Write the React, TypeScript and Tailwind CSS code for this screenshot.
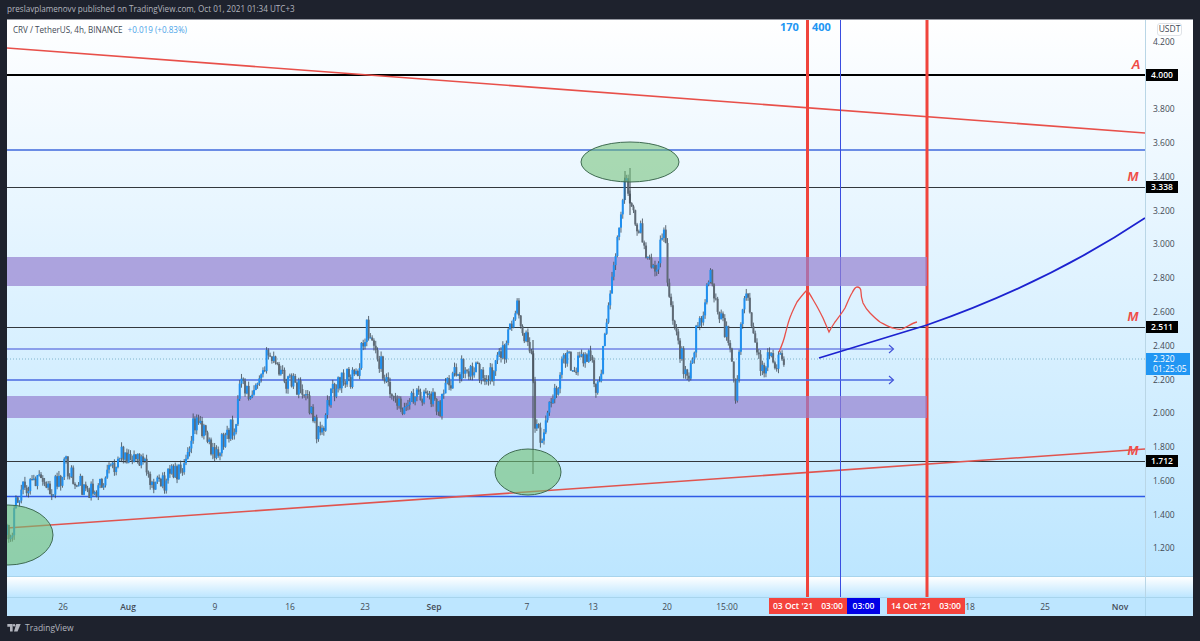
const priceTicks = [
  ["4.200", 41], ["3.800", 108], ["3.600", 142], ["3.400", 176], ["3.200", 210],
  ["3.000", 243], ["2.800", 277], ["2.600", 311], ["2.400", 345], ["2.200", 379],
  ["2.000", 412], ["1.800", 446], ["1.600", 480], ["1.400", 514], ["1.200", 547],
] as const;

const priceTags = [["4.000", 75], ["3.338", 187], ["2.511", 327], ["1.712", 461]] as const;

const timeTicks = [
  ["26", 63, false], ["Aug", 128, true], ["9", 215, false], ["16", 290, false],
  ["23", 365, false], ["Sep", 434, true], ["7", 527, false], ["13", 593, false],
  ["20", 667, false], ["15:00", 727, false], ["18", 970, false], ["25", 1045, false],
  ["Nov", 1120, true],
] as const;

const levels = [
  { y: 75, color: "#000000", w: 2 },
  { y: 150, color: "#3f68dc", w: 1.5 },
  { y: 187.5, color: "#33383d", w: 1 },
  { y: 327.5, color: "#33383d", w: 1 },
  { y: 461.5, color: "#33383d", w: 1 },
  { y: 496.5, color: "#2f5ae6", w: 1.5 },
];

const signs = [
  ["A", 1136, 65],
  ["M", 1133, 177],
  ["M", 1133, 317],
  ["M", 1133, 451],
] as const;

// close price path, in picture pixels
const path: [number, number][] = [
  [7, 535], [12, 530], [15, 510], [22, 490], [30, 485], [40, 482], [50, 490], [60, 478], [66, 465],
  [75, 483], [85, 487], [95, 490], [105, 482], [115, 462], [122, 452], [130, 455], [140, 458],
  [150, 475], [160, 488], [170, 472], [180, 470], [190, 440], [193, 420], [205, 428], [214, 460],
  [225, 435], [235, 425], [240, 385], [250, 395], [262, 365], [270, 355], [280, 375], [295, 385],
  [305, 395], [318, 435], [325, 420], [330, 395], [345, 375], [355, 380], [367, 328], [375, 350],
  [385, 375], [395, 395], [405, 410], [415, 395], [430, 395], [440, 408], [450, 380], [465, 365],
  [475, 372], [490, 375], [505, 350], [517, 305], [525, 335], [532, 360], [535, 420], [542, 440],
  [548, 410], [555, 395], [565, 355], [575, 365], [590, 355], [597, 395], [605, 340], [612, 280],
  [620, 215], [626, 180], [630, 210], [640, 230], [648, 265], [655, 275], [665, 225], [668, 300],
  [678, 340], [688, 385], [695, 340], [705, 300], [710, 275], [720, 320], [730, 340], [735, 400],
  [742, 310], [747, 290], [752, 335], [762, 370], [770, 350], [778, 365], [785, 358],
];

function closeAt(x: number) {
  for (let i = 1; i < path.length; i++) {
    if (x <= path[i][0]) {
      const [x0, y0] = path[i - 1];
      const [x1, y1] = path[i];
      return y0 + ((y1 - y0) * (x - x0)) / (x1 - x0);
    }
  }
  return path[path.length - 1][1];
}

function makeCandles() {
  let seed = 17;
  const rnd = () => {
    seed = (seed * 16807) % 2147483647;
    return seed / 2147483647;
  };
  const list = [];
  let prev = closeAt(7);
  for (let x = 7; x <= 785; x += 1.79) {
    const close = closeAt(x) + (rnd() - 0.5) * 20;
    const top = Math.min(prev, close);
    const bottom = Math.max(prev, close);
    list.push({
      x,
      top,
      bottom,
      high: top - rnd() * 5,
      low: bottom + rnd() * 5,
      up: close < prev,
    });
    prev = close;
  }
  // blue candles sit on top of the grey ones
  return list.sort((a, b) => Number(a.up) - Number(b.up));
}

const candles = makeCandles();

function Chart() {
  return (
    <svg width="1138" height="578" viewBox="7 20 1138 578" className="block">
      {/* dotted last price */}
      <line x1="7" x2="1145" y1="359" y2="359" stroke="#7fb4cc" strokeWidth="1" strokeDasharray="1 2" />

      {levels.map((l) => (
        <line key={l.y} x1="7" x2="1145" y1={l.y} y2={l.y} stroke={l.color} strokeWidth={l.w} />
      ))}

      <line x1="7" y1="48" x2="1145" y2="133" stroke="#e8504a" strokeWidth="1.6" />
      <line x1="7" y1="528" x2="1145" y2="449" stroke="#e0544f" strokeWidth="1.6" />

      <line x1="840.5" x2="840.5" y1="20" y2="598" stroke="#3a4de0" strokeWidth="1" />
      <line x1="807.5" x2="807.5" y1="20" y2="598" stroke="#f0443c" strokeWidth="3" />
      <line x1="927" x2="927" y1="20" y2="598" stroke="#f0443c" strokeWidth="3" />

      <rect x="7" y="257" width="920" height="29" fill="#9680d0" opacity="0.7" />
      <rect x="7" y="396" width="920" height="22" fill="#9680d0" opacity="0.7" />

      {/* arrows */}
      <line x1="7" x2="893" y1="349" y2="349" stroke="#3f4fd8" strokeWidth="1.2" />
      <line x1="7" x2="893" y1="380" y2="380" stroke="#4a68e0" strokeWidth="1.5" />
      <path d="M889 345 L893.5 349 L889 353" fill="none" stroke="#3f4fd8" strokeWidth="1.1" />
      <path d="M889 376 L893.5 380 L889 384" fill="none" stroke="#3f4fd8" strokeWidth="1.1" />

      {candles.map((c, i) => (
        <g key={i}>
          <line x1={c.x} x2={c.x} y1={c.high} y2={c.low} stroke="#3a4550" strokeWidth="0.8" />
          <rect
            x={c.x - 1}
            y={c.top}
            width="2"
            height={Math.max(c.bottom - c.top, 1)}
            fill={c.up ? "#1e8ff0" : "#5f6a75"}
          />
        </g>
      ))}
      <line x1="533" x2="533" y1="340" y2="474" stroke="#3d4650" strokeWidth="1" />
      <line x1="630" x2="630" y1="168" y2="215" stroke="#3d4650" strokeWidth="1" />
      <line x1="625" x2="625" y1="171" y2="200" stroke="#3d4650" strokeWidth="1" />

      <ellipse cx="630" cy="162" rx="49" ry="20" fill="#6fbf73" fillOpacity="0.55" stroke="#3f6b52" strokeWidth="1" />
      <ellipse cx="528" cy="472" rx="33" ry="23" fill="#6fbf73" fillOpacity="0.6" stroke="#3f6b52" strokeWidth="1" />
      <ellipse cx="8" cy="535" rx="45" ry="30" fill="#6fbf73" fillOpacity="0.6" stroke="#3f6b52" strokeWidth="1" />

      <path
        d="M779 352 C782 345 784 340 785 335 C787 328 788 322 791 315 C793 310 795 306 797 302 C800 298 804 293 807 290 C810 294 812 298 815 303 C818 308 820 312 823 318 L829 332 C831 328 833 325 835 322 C838 318 842 313 845 308 C847 304 849 298 852 293 C854 289 856 287 857 287 C860 287 861 289 861 292 C861 296 862 300 863 303 C865 307 867 310 870 313 C873 316 877 320 880 322 C884 324 889 327 893 328 C896 329 899 330 902 329 C907 327 912 323 917 322"
        fill="none"
        stroke="#e8504a"
        strokeWidth="1.3"
      />
      <path d="M819 358 L927 325 C990 303 1070 268 1145 218" fill="none" stroke="#1c22d0" strokeWidth="1.8" />

      <g className="font-['Liberation_Sans',sans-serif] font-bold italic" fill="#ef4c47" fontSize="13">
        {signs.map(([s, x, y]) => (
          <text key={y} x={x} y={y + 4} textAnchor="middle">{s}</text>
        ))}
      </g>
    </svg>
  );
}

function PriceAxis() {
  return (
    <div className="relative w-[47px] border-l border-[#b9d6e6] text-[8.5px] text-[#434a55]">
      <div className="absolute left-[11px] top-[3px] flex h-[13px] w-[25px] items-center justify-center rounded-[3px] border border-[#dfe3e8] bg-white leading-none">
        USDT
      </div>
      {priceTicks.map(([label, y]) => (
        <span key={label} className="absolute left-[7px] leading-none" style={{ top: y - 23 }}>
          {label}
        </span>
      ))}
      {priceTags.map(([label, y]) => (
        <span
          key={label}
          className="absolute left-0 flex h-[12px] w-[32px] items-center justify-center bg-black font-semibold leading-none text-white"
          style={{ top: y - 26 }}
        >
          {label}
        </span>
      ))}
      <div className="absolute left-0 top-[333px] flex h-[22px] w-[44px] flex-col justify-center bg-[#2196f3] pl-[7px] font-medium leading-[10px] text-white">
        <span>2.320</span>
        <span>01:25:05</span>
      </div>
    </div>
  );
}

function TimeAxis() {
  return (
    <div className="relative flex h-[19px] border-t border-[#a8d4ec] bg-[#bde6ff] text-[8.5px] text-[#434a55]">
      <div className="relative w-[1138px]">
        {timeTicks.map(([label, x, bold]) => (
          <span
            key={label}
            className={`absolute top-[2px] -translate-x-1/2 leading-[14px] ${bold ? "font-semibold" : ""}`}
            style={{ left: x - 7 }}
          >
            {label}
          </span>
        ))}
        <div className="absolute left-[762px] top-0 flex h-[16px] whitespace-nowrap text-[8.5px] font-semibold text-white">
          <span className="flex w-[78px] items-center justify-center gap-[8px] bg-[#f4433c]">
            <span>03 Oct '21</span>
            <span>03:00</span>
          </span>
          <span className="flex w-[33px] items-center justify-center bg-[#0000e6]">03:00</span>
          <span className="ml-[7px] flex w-[78px] items-center justify-center gap-[8px] bg-[#f4433c]">
            <span>14 Oct '21</span>
            <span>03:00</span>
          </span>
        </div>
      </div>
      <div className="flex-1 border-l border-[#a8d4ec]" />
    </div>
  );
}

function Logo() {
  return (
    <svg width="14" height="8" viewBox="0 0 15 9" className="block">
      <path d="M0 0H6V8.5H3V3H0Z" fill="#b2b5be" />
      <circle cx="7.6" cy="1.5" r="1.4" fill="#b2b5be" />
      <path d="M10 0H15L11.5 8.5H7.5Z" fill="#b2b5be" />
    </svg>
  );
}

export default function App() {
  return (
    <div className="flex h-screen w-full flex-col overflow-hidden bg-[#1e222d] font-['Open_Sans','Liberation_Sans',sans-serif] text-[#b2b5be]">
      <div className="flex h-[19px] items-center whitespace-nowrap pl-[7px] text-[8.1px] font-medium leading-none">
        preslavplamenovv published on TradingView.com, Oct 01, 2021 01:34 UTC+3
      </div>

      <div className="mx-[7px] w-[1186px] border-t border-[#9598a1]">
        <div className="relative h-[577px]">
          {/* background, the strip at the bottom starts the gradient again */}
          <div className="h-[556px] bg-[linear-gradient(#ffffff,#f6fbff_12%,#bde6ff)]" />
          <div className="h-[21px] border-t border-[#a8d4ec] bg-[linear-gradient(#ffffff,#bde6ff)]" />

          <div className="absolute inset-0 flex">
            <div className="relative w-[1138px] overflow-hidden">
              <Chart />
              <div className="absolute left-[6px] top-[3px] flex gap-[5px] whitespace-nowrap text-[8.1px] leading-[14px]">
                <span className="text-[#434a55]">CRV / TetherUS, 4h, BINANCE</span>
                <span className="text-[#4aa3e8]">+0.019 (+0.83%)</span>
              </div>
              <div className="absolute left-[773px] top-0 flex gap-[13px] text-[11px] font-bold leading-[14px] text-[#2196f3]">
                <span>170</span>
                <span>400</span>
              </div>
            </div>
            <PriceAxis />
          </div>
        </div>
        <TimeAxis />
      </div>

      <div className="flex flex-1 items-center gap-[4px] pl-[7px] pb-[1px] text-[8.5px] font-medium leading-none">
        <Logo />
        <span>TradingView</span>
      </div>
    </div>
  );
}
